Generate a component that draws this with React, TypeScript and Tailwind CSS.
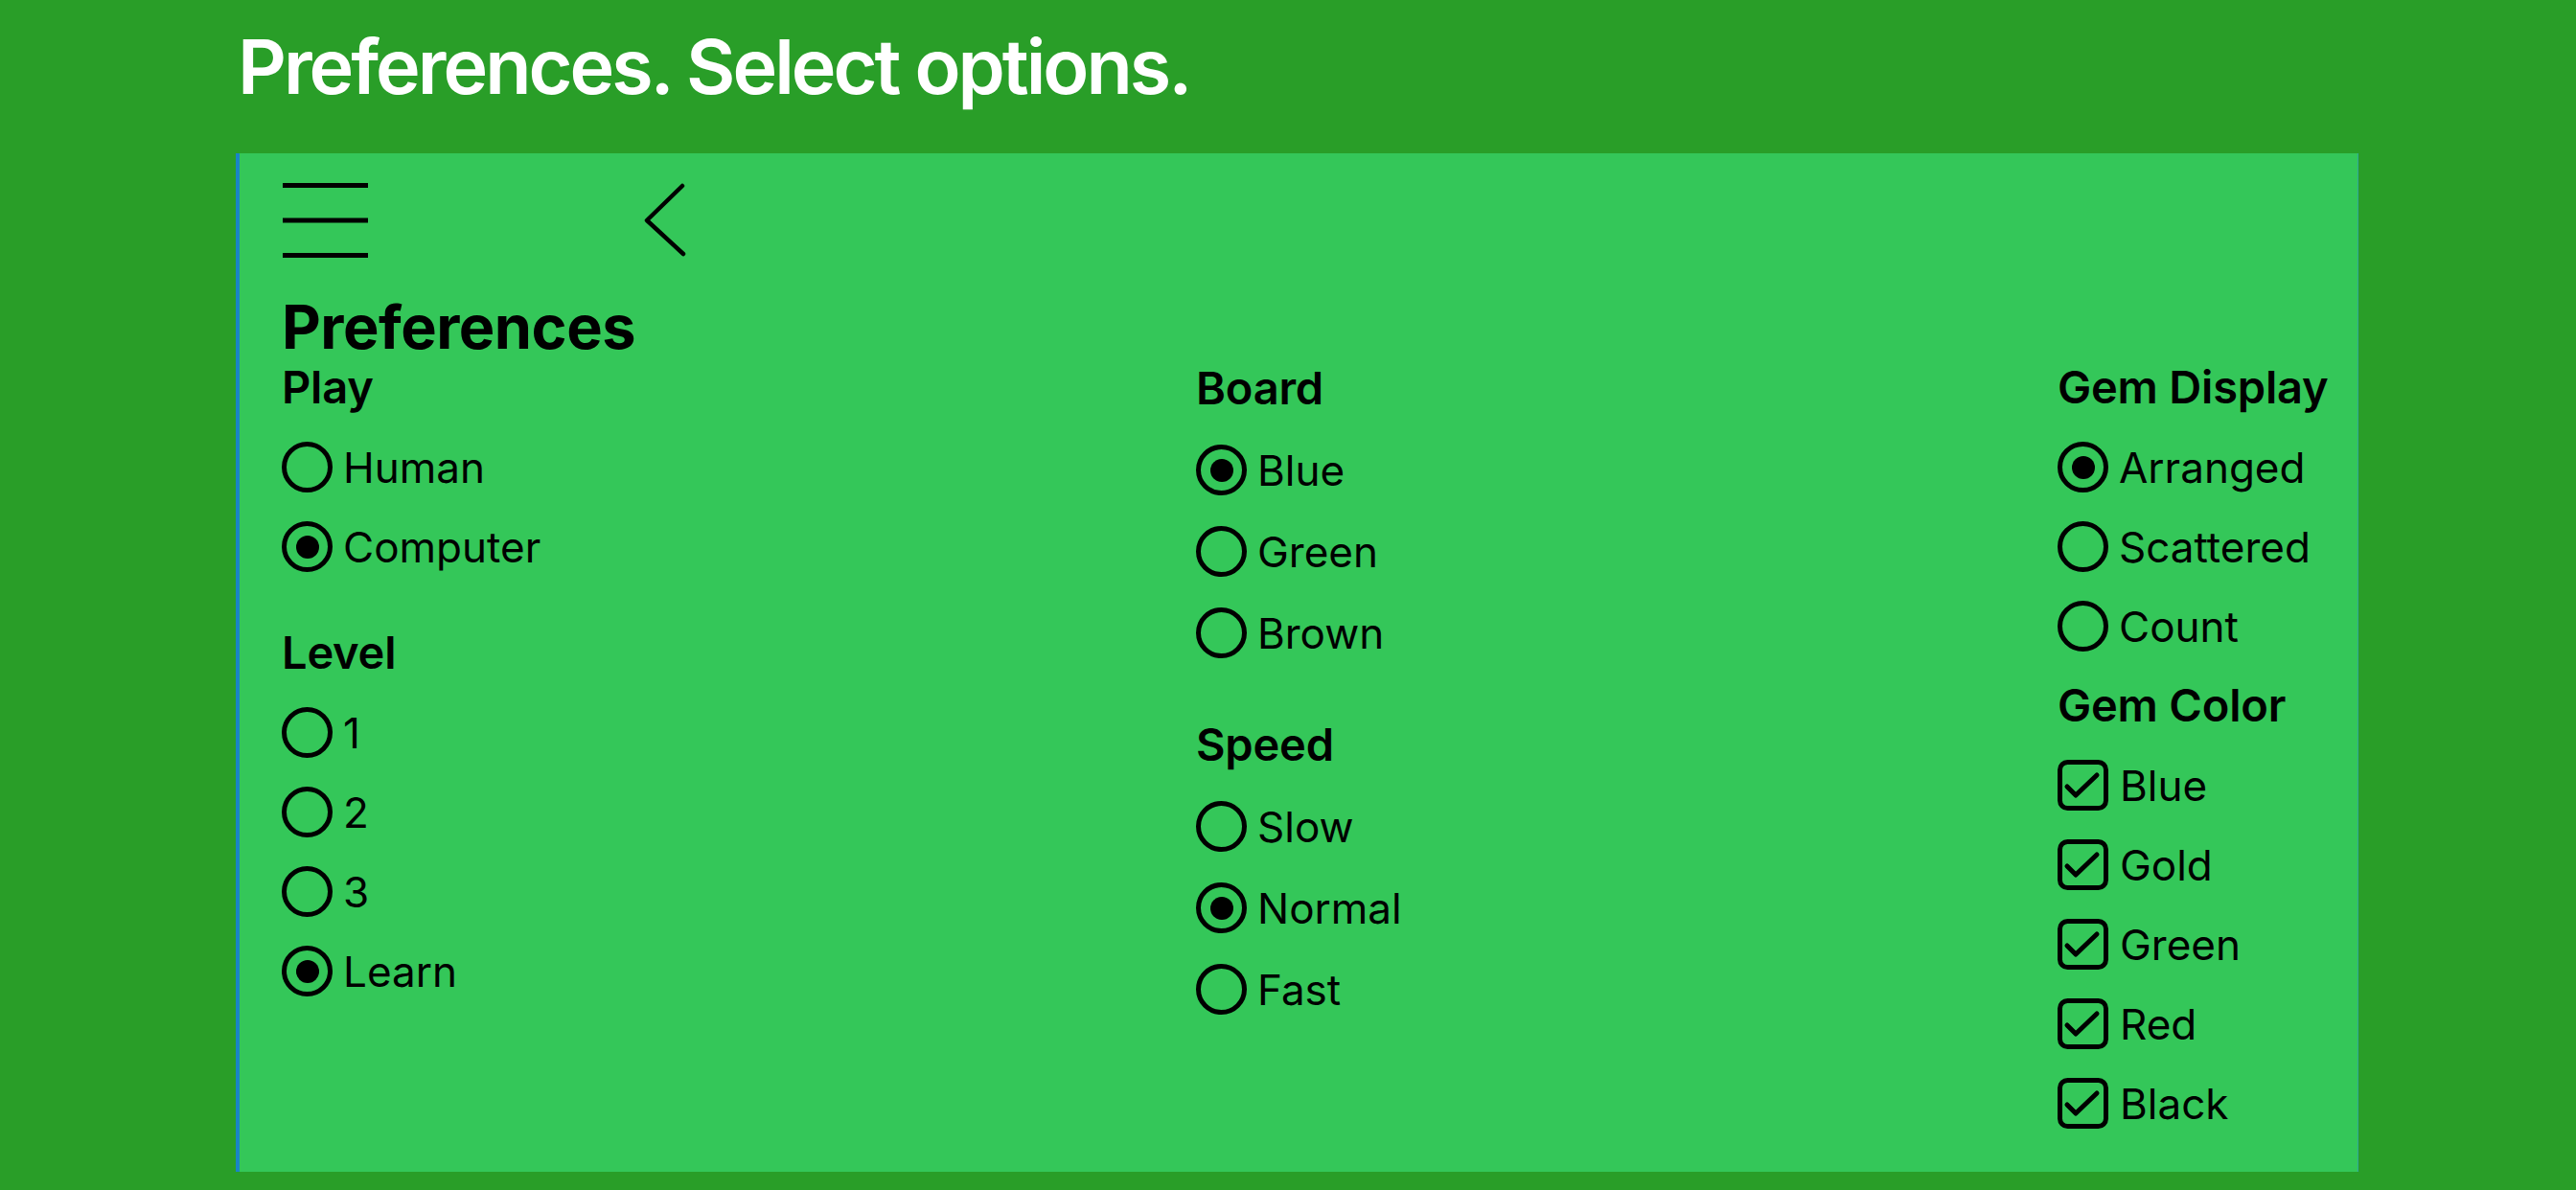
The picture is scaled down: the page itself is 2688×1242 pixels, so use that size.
import React from 'react';

type Option = { label: string; selected?: boolean };

const playOptions: Option[] = [{ label: 'Human' }, { label: 'Computer', selected: true }];
const levelOptions: Option[] = [{ label: '1' }, { label: '2' }, { label: '3' }, { label: 'Learn', selected: true }];
const boardOptions: Option[] = [{ label: 'Blue', selected: true }, { label: 'Green' }, { label: 'Brown' }];
const speedOptions: Option[] = [{ label: 'Slow' }, { label: 'Normal', selected: true }, { label: 'Fast' }];
const displayOptions: Option[] = [{ label: 'Arranged', selected: true }, { label: 'Scattered' }, { label: 'Count' }];
const gemColors = ['Blue', 'Gold', 'Green', 'Red', 'Black'];

function Hamburger() {
  return (
    <svg width="91" height="78" viewBox="0 0 91 78" fill="none" stroke="black" strokeWidth="5" strokeLinecap="butt">
      <line x1="1" y1="2.5" x2="90" y2="2.5" />
      <line x1="1" y1="39" x2="90" y2="39" />
      <line x1="1" y1="75.5" x2="90" y2="75.5" />
    </svg>
  );
}

function Chevron() {
  return (
    <svg width="48" height="80" viewBox="0 0 48 80" fill="none" stroke="black" strokeWidth="4.5" strokeLinecap="round" strokeLinejoin="round">
      <polyline points="42,4 5,40 43,75" />
    </svg>
  );
}

function Radio({ selected }: { selected?: boolean }) {
  return (
    <span className="flex h-[53px] w-[53px] shrink-0 items-center justify-center rounded-full border-[5px] border-black">
      {selected && <span className="h-[24px] w-[24px] rounded-full bg-black" />}
    </span>
  );
}

function CheckBox() {
  return (
    <svg width="53" height="53" viewBox="0 0 53 53" fill="none" stroke="black" strokeWidth="5" strokeLinecap="round" strokeLinejoin="round" className="shrink-0">
      <rect x="2.5" y="2.5" width="48" height="48" rx="8" />
      <polyline points="10,28 19,37 41,16" />
    </svg>
  );
}

function Heading({ children, h }: { children: React.ReactNode; h: string }) {
  return <div className={`flex items-center text-[47px] font-semibold tracking-[-0.2px] ${h}`}>{children}</div>;
}

function RadioRow({ option, h }: { option: Option; h: string }) {
  return (
    <div className={`flex items-center gap-[11px] ${h}`}>
      <Radio selected={option.selected} />
      <span className="text-[44px] leading-none">{option.label}</span>
    </div>
  );
}

export default function App() {
  return (
    <div className="min-h-screen w-full bg-[#299e28] pt-[29px] font-['Inter'] text-black">
      <h1 className="h-[80px] pl-[248px] text-[79px] font-semibold leading-[80px] tracking-[-3px] text-white">
        Preferences. Select options.
      </h1>

      <div className="ml-[246px] mr-[227px] mt-[51px] h-[1063px] border-l-4 border-r border-l-[#1a84c6] border-r-[#2fa79a] bg-[#34c759] pl-[44px] pt-[31px]">
        <div className="flex items-start">
          <Hamburger />
          <div className="ml-[285px] -mt-[1px]">
            <Chevron />
          </div>
        </div>

        <div className="mt-[49px] h-[44px] text-[63px] font-bold leading-[44px] tracking-[-0.5px]">Preferences</div>

        <div className="grid grid-cols-[954px_899px_1fr]">
          <div className="flex flex-col">
            <Heading h="h-[83px]">Play</Heading>
            {playOptions.map((o) => (
              <RadioRow key={o.label} option={o} h="h-[83px]" />
            ))}
            <div className="mt-[28px]">
              <Heading h="h-[83px]">Level</Heading>
              {levelOptions.map((o) => (
                <RadioRow key={o.label} option={o} h="h-[83px]" />
              ))}
            </div>
          </div>

          <div className="flex flex-col">
            <Heading h="h-[85px]">Board</Heading>
            {boardOptions.map((o) => (
              <RadioRow key={o.label} option={o} h="h-[85px]" />
            ))}
            <div className="mt-[32px]">
              <Heading h="h-[85px]">Speed</Heading>
              {speedOptions.map((o) => (
                <RadioRow key={o.label} option={o} h="h-[85px]" />
              ))}
            </div>
          </div>

          <div className="flex flex-col">
            <Heading h="h-[83px]">Gem Display</Heading>
            {displayOptions.map((o) => (
              <RadioRow key={o.label} option={o} h="h-[83px]" />
            ))}
            <Heading h="h-[83px]">Gem Color</Heading>
            {gemColors.map((c) => (
              <div key={c} className="flex h-[83px] items-center gap-[12px]">
                <CheckBox />
                <span className="text-[44px] leading-none">{c}</span>
              </div>
            ))}
          </div>
        </div>
      </div>
    </div>
  );
}
